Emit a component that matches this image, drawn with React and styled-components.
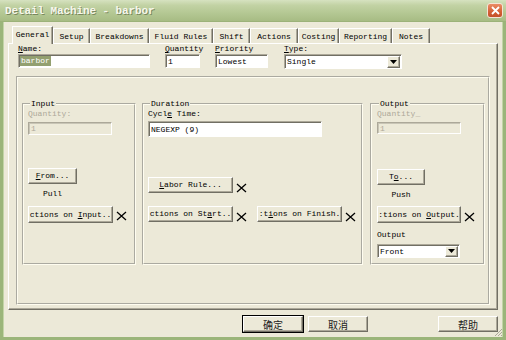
import React from "react";
import styled, { createGlobalStyle } from "styled-components";

const GlobalStyle = createGlobalStyle`
  html, body {
    margin: 0;
    padding: 0;
    background: #ece9d8;
  }
  body {
    width: 506px;
    height: 340px;
    overflow: hidden;
  }
`;

const Window = styled.div`
  width: 506px;
  height: 340px;
  display: flex;
  flex-direction: column;
  background: #ece9d8;
  font-family: "Liberation Mono", "DejaVu Sans Mono", monospace;
  font-size: 8px;
  color: #000;
  position: relative;
`;

const TitleBar = styled.div`
  height: 22px;
  flex: none;
  display: flex;
  align-items: center;
  justify-content: space-between;
  padding: 0 3px 0 5px;
  box-sizing: border-box;
  background: linear-gradient(to bottom, #d6e2c0 0%, #c2d2a4 25%, #b3c792 65%, #a7bc84 100%);
  border-bottom: 1px solid #9cb279;
`;

const Title = styled.span`
  font-family: "Liberation Mono", "DejaVu Sans Mono", monospace;
  font-weight: bold;
  font-size: 11px;
  color: #f6f7ec;
  text-shadow: 1px 1px 0 rgba(70, 82, 50, 0.55);
  letter-spacing: -0.1px;
`;

const CloseButton = styled.div`
  width: 16px;
  height: 15px;
  box-sizing: border-box;
  border: 1px solid #f4e3d6;
  border-radius: 3px;
  background: linear-gradient(to bottom, #ea8d66, #d45f35 60%, #c4512a);
  display: flex;
  align-items: center;
  justify-content: center;
`;

const Frame = styled.div`
  flex: 1;
  display: flex;
  flex-direction: column;
  border: 3px solid #9bb57a;
  border-top: 0;
  box-shadow: inset 1px 0 0 #c3d4a7, inset -1px 0 0 #c3d4a7;
`;

const TabStrip = styled.div`
  height: 21px;
  display: flex;
  align-items: flex-end;
  padding-left: 9px;
`;

const Tab = styled.div`
  box-sizing: border-box;
  width: ${(p) => p.$w}px;
  height: ${(p) => (p.$active ? 18 : 15)}px;
  margin-bottom: ${(p) => (p.$active ? -1 : 0)}px;
  display: flex;
  align-items: center;
  justify-content: center;
  background: #ece9d8;
  border-top: 1px solid #fff;
  border-left: 1px solid #fff;
  border-right: 1px solid #716f64;
  box-shadow: inset -1px 0 0 #aca899;
  position: relative;
  z-index: ${(p) => (p.$active ? 1 : 0)};
  white-space: nowrap;
  padding-bottom: ${(p) => (p.$active ? 2 : 0)}px;
`;

const Panel = styled.div`
  box-sizing: border-box;
  margin: 0 5px;
  height: 267px;
  border: 1px solid;
  border-color: #fff #716f64 #716f64 #fff;
  box-shadow: inset -1px -1px 0 #aca899;
  padding-left: 7px;
`;

const FieldRow = styled.div`
  display: flex;
  gap: 15px;
  margin-left: 2px;
`;

const Field = styled.div`
  width: ${(p) => p.$w}px;
  margin-left: ${(p) => p.$ml || 0}px;
  display: flex;
  flex-direction: column;
`;

const Label = styled.div`
  line-height: ${(p) => p.$lh || 9}px;
  height: ${(p) => p.$lh || 9}px;
  white-space: nowrap;
  color: ${(p) => (p.$disabled ? "#aca899" : "#000")};
  margin-top: ${(p) => p.$mt || 0}px;
`;

const TextBox = styled.div`
  box-sizing: border-box;
  width: ${(p) => p.$w}px;
  height: ${(p) => p.$h}px;
  margin-top: ${(p) => p.$mt || 0}px;
  background: ${(p) => (p.$disabled ? "#ece9d8" : "#fff")};
  color: ${(p) => (p.$disabled ? "#aca899" : "#000")};
  border-top: 1px solid #aca899;
  border-left: 1px solid #aca899;
  border-bottom: 1px solid #fff;
  border-right: 1px solid #fff;
  box-shadow: inset 1px 1px 0 ${(p) => (p.$disabled ? "#c8c5b6" : "#716f64")};
  display: flex;
  align-items: center;
  padding-left: 2px;
  white-space: pre;
  overflow: hidden;
`;

const Selected = styled.span`
  background: #93a070;
  color: #fff;
  padding: 0 1px;
  margin-left: -1px;
  line-height: 10px;
`;

const Select = styled(TextBox)`
  justify-content: space-between;
  padding-right: 1px;
`;

const DropButton = styled.div`
  width: 13px;
  height: ${(p) => p.$h}px;
  box-sizing: border-box;
  background: #ece9d8;
  border-top: 1px solid #fff;
  border-left: 1px solid #fff;
  border-right: 1px solid #716f64;
  border-bottom: 1px solid #716f64;
  box-shadow: inset -1px -1px 0 #aca899;
  display: flex;
  align-items: center;
  justify-content: center;
`;

const BigGroup = styled.div`
  box-sizing: border-box;
  width: 474px;
  height: 229px;
  margin-top: 7px;
  border: 2px groove #fffdf0;
  padding: 21px 0 0 4px;
  display: flex;
  gap: 6px;
`;

const Group = styled.fieldset`
  box-sizing: border-box;
  margin: 0;
  margin-left: ${(p) => p.$ml || 0}px;
  min-width: 0;
  width: ${(p) => p.$w}px;
  height: 166px;
  padding: 1px ${(p) => p.$pr || 4}px 0 ${(p) => p.$pl || 4}px;
  border: 2px groove #fffdf0;
  display: flex;
  flex-direction: column;
  align-items: flex-start;
`;

const Legend = styled.legend`
  font-size: 8px;
  line-height: 9px;
  padding: 0 1px;
  margin-left: 2px;
`;

const Button = styled.div`
  box-sizing: border-box;
  width: ${(p) => p.$w}px;
  height: ${(p) => p.$h || 16}px;
  line-height: ${(p) => (p.$h || 16) - 2}px;
  margin-top: ${(p) => p.$mt || 0}px;
  background: #ece9d8;
  border-top: 1px solid #fff;
  border-left: 1px solid #fff;
  border-right: 1px solid #716f64;
  border-bottom: 1px solid #716f64;
  box-shadow: inset -1px -1px 0 #aca899;
  text-align: center;
  white-space: pre;
  overflow: hidden;
  flex: none;
`;

const Caption = styled.div`
  line-height: 9px;
  margin-top: 5px;
  width: ${(p) => p.$w}px;
  text-align: center;
`;

const ButtonRow = styled.div`
  display: flex;
  align-items: flex-end;
  gap: 3px;
  margin-top: ${(p) => p.$mt || 0}px;
`;

const XWrap = styled.div`
  display: flex;
  margin-bottom: ${(p) => p.$mb || 0}px;
  margin-right: ${(p) => p.$mr || 0}px;
`;

const Footer = styled.div`
  flex: 1;
  display: flex;
  justify-content: flex-end;
  align-items: flex-start;
  gap: 5px;
  padding: 6px 5px 0 0;
`;

const DialogButton = styled.div`
  box-sizing: border-box;
  width: 60px;
  height: 16px;
  margin-right: ${(p) => p.$mr || 0}px;
  background: #ece9d8;
  border-top: 1px solid #fff;
  border-left: 1px solid #fff;
  border-right: 1px solid #716f64;
  border-bottom: 1px solid #716f64;
  box-shadow: ${(p) =>
    p.$default
      ? "0 0 0 1px #000, inset -1px -1px 0 #aca899"
      : "inset -1px -1px 0 #aca899"};
  display: flex;
  align-items: center;
  justify-content: center;
  font-family: "Noto Sans CJK SC", "Liberation Sans", sans-serif;
  font-size: 10px;
  color: #222;
`;

const Grip = styled.svg`
  position: absolute;
  right: 3px;
  bottom: 3px;
`;

const XMark = ({ mb, mr }) => (
  <XWrap $mb={mb} $mr={mr}>
    <svg width="11" height="10" viewBox="0 0 11 10">
      <path d="M1 1 L10 9 M10 1 L1 9" stroke="#000" strokeWidth="1.3" fill="none" />
    </svg>
  </XWrap>
);

const Arrow = () => (
  <svg width="7" height="4" viewBox="0 0 7 4">
    <path d="M0 0 H7 L3.5 4 Z" fill="#000" />
  </svg>
);

const tabs = [
  ["General", 41],
  ["Setup", 37],
  ["Breakdowns", 59],
  ["Fluid Rules", 64],
  ["Shift", 37],
  ["Actions", 48],
  ["Costing", 41],
  ["Reporting", 53],
  ["Notes", 38],
];

export default function App() {
  return (
    <Window>
      <GlobalStyle />
      <TitleBar>
        <Title>Detail Machine - barbor</Title>
        <CloseButton>
          <svg width="9" height="9" viewBox="0 0 9 9">
            <path d="M1 1 L8 8 M8 1 L1 8" stroke="#fff" strokeWidth="1.8" fill="none" />
          </svg>
        </CloseButton>
      </TitleBar>
      <Frame>
        <TabStrip>
          {tabs.map(([name, w], i) => (
            <Tab key={name} $w={w} $active={i === 0}>
              {name}
            </Tab>
          ))}
        </TabStrip>
        <Panel>
          <FieldRow>
            <Field $w={132}>
              <Label $lh={10}>
                <u>N</u>ame:
              </Label>
              <TextBox $w={132} $h={14}>
                <Selected>barbor</Selected>
              </TextBox>
            </Field>
            <Field $w={35}>
              <Label $lh={10}>
                <u>Q</u>uantity
              </Label>
              <TextBox $w={35} $h={14}>1</TextBox>
            </Field>
            <Field $w={53}>
              <Label $lh={10}>
                <u>P</u>riority
              </Label>
              <TextBox $w={53} $h={14}>Lowest</TextBox>
            </Field>
            <Field $w={118} $ml={1}>
              <Label $lh={10}>
                <u>T</u>ype:
              </Label>
              <Select $w={118} $h={15}>
                <span>Single</span>
                <DropButton $h={12}>
                  <Arrow />
                </DropButton>
              </Select>
            </Field>
          </FieldRow>

          <BigGroup>
            <Group $w={114}>
              <Legend>Input</Legend>
              <Label $disabled>Quantity:</Label>
              <TextBox $w={84} $h={13} $mt={4} $disabled>
                1
              </TextBox>
              <Button $w={49} $mt={33}>
                <u>F</u>rom...
              </Button>
              <Caption $w={49}>Pull</Caption>
              <ButtonRow $mt={8}>
                <Button $w={85} $h={17}>
                  ctions on <u>I</u>nput..
                </Button>
                <XMark mb={2} />
              </ButtonRow>
            </Group>

            <Group $w={221}>
              <Legend>Duration</Legend>
              <Label>
                Cycl<u>e</u> Time:
              </Label>
              <TextBox $w={174} $h={16} $mt={3}>
                NEGEXP (9)
              </TextBox>
              <ButtonRow $mt={40}>
                <Button $w={85}>
                  <u>L</u>abor Rule...
                </Button>
                <XMark />
              </ButtonRow>
              <ButtonRow $mt={13}>
                <Button $w={85}>
                  ctions on St<u>a</u>rt..
                </Button>
                <XMark mr={7} />
                <Button $w={85}>
                  :t<u>i</u>ons on Finish.
                </Button>
                <XMark />
              </ButtonRow>
            </Group>

            <Group $w={115} $pl={5} $ml={1}>
              <Legend>Output</Legend>
              <Label $disabled>Quantity_</Label>
              <TextBox $w={84} $h={12} $mt={4} $disabled>
                1
              </TextBox>
              <Button $w={48} $mt={35}>
                T<u>o</u>...
              </Button>
              <Caption $w={48}>Push</Caption>
              <ButtonRow $mt={7}>
                <Button $w={84} $h={17}>
                  :tions on <u>O</u>utput.
                </Button>
                <XMark mb={1} />
              </ButtonRow>
              <Label $mt={7}>Output</Label>
              <Select $w={83} $h={14} $mt={5}>
                <span>Front</span>
                <DropButton $h={11}>
                  <Arrow />
                </DropButton>
              </Select>
            </Group>
          </BigGroup>
        </Panel>
        <Footer>
          <DialogButton $default>确定</DialogButton>
          <DialogButton $mr={65}>取消</DialogButton>
          <DialogButton>帮助</DialogButton>
        </Footer>
      </Frame>
      <Grip width="9" height="9" viewBox="0 0 9 9">
        <path d="M8 1 L1 8 M8 4 L4 8 M8 7 L7 8" stroke="#aca899" strokeWidth="1" fill="none" />
      </Grip>
    </Window>
  );
}
